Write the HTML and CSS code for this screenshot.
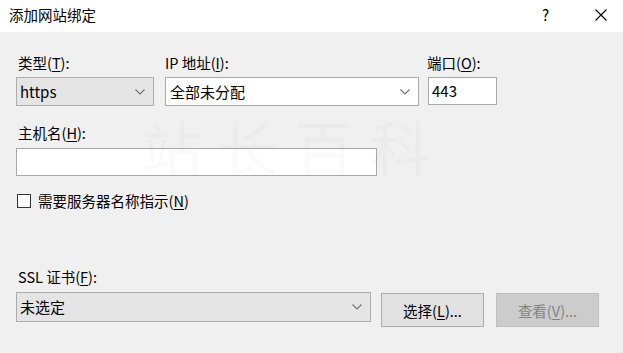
FILE: index.html
```html
<!DOCTYPE html>
<html lang="zh-CN">
<head>
<meta charset="utf-8">
<title>添加网站绑定</title>
<link rel="stylesheet" href="styles.css">
</head>
<body>
<div class="dialog">
  <div class="titlebar">
    <div class="title">添加网站绑定</div>
    <div class="title-btns">
      <span class="help">?</span>
      <svg class="close" width="12" height="12" viewBox="0 0 12 12"><path d="M0.5 0.5 L11.5 11.5 M11.5 0.5 L0.5 11.5" stroke="#000" stroke-width="1.1" fill="none"/></svg>
    </div>
  </div>
  <div class="main">
    <div class="row1">
      <div class="col col-type">
        <div class="label">类型(<u>T</u>):</div>
        <div class="combo combo-ro type-box"><span>https</span><svg class="chev" width="10" height="6" viewBox="0 0 10 6"><path d="M0.5 0.5 L5 5 L9.5 0.5" stroke="#707070" stroke-width="1.1" fill="none"/></svg></div>
      </div>
      <div class="col col-ip">
        <div class="label label-ip">IP 地址(<u>I</u>):</div>
        <div class="combo combo-edit ip-box"><span>全部未分配</span><svg class="chev" width="10" height="6" viewBox="0 0 10 6"><path d="M0.5 0.5 L5 5 L9.5 0.5" stroke="#707070" stroke-width="1.1" fill="none"/></svg></div>
      </div>
      <div class="col col-port">
        <div class="label label-port">端口(<u>O</u>):</div>
        <div class="textbox port-box">443</div>
      </div>
    </div>
    <div class="label host-label">主机名(<u>H</u>):</div>
    <div class="textbox host-box"></div>
    <div class="check-row">
      <span class="checkbox"></span>
      <span class="check-label">需要服务器名称指示(<u>N</u>)</span>
    </div>
    <div class="label ssl-label">SSL 证书(<u>F</u>):</div>
    <div class="ssl-row">
      <div class="combo combo-ro ssl-box"><span>未选定</span><svg class="chev" width="10" height="6" viewBox="0 0 10 6"><path d="M0.5 0.5 L5 5 L9.5 0.5" stroke="#707070" stroke-width="1.1" fill="none"/></svg></div>
      <div class="btn">选择(<u>L</u>)...</div>
      <div class="btn btn-disabled">查看(<u>V</u>)...</div>
    </div>
  </div>
  <div class="watermark">站长百科</div>
</div>
</body>
</html>
```
FILE: styles.css
```css
* { box-sizing: border-box; }
html, body { margin: 0; padding: 0; }
body {
  width: 623px;
  height: 353px;
  overflow: hidden;
  background: #f0f0f0;
  font-family: "Noto Sans CJK SC", "Noto Sans", sans-serif;
  color: #000;
}
.dialog { position: relative; width: 623px; height: 353px; }
u { text-decoration: underline; text-underline-offset: 2px; text-decoration-thickness: 1px; }

.titlebar {
  height: 32px;
  background: #fff;
  display: flex;
  align-items: center;
  justify-content: space-between;
  padding: 0 16px 0 9px;
}
.title { font-size: 14.5px; line-height: 20px; margin-top: -2px; }
.title-btns { display: flex; align-items: center; gap: 46px; margin-top: -2px; }
.help { font-size: 15px; line-height: 20px; }

.main { padding: 21px 0 0 16px; }
.row1 { display: flex; }
.col { display: flex; flex-direction: column; }
.col-type { width: 138px; }
.col-ip { width: 254px; margin-left: 11px; }
.col-port { width: 69px; margin-left: 9px; }

.label { font-size: 14.5px; line-height: 20px; height: 20px; margin-bottom: 4px; padding-left: 2px; }
.label-ip { padding-left: 0; }
.label-port { padding-left: 0; margin-left: -1px; }

.combo {
  height: 29px;
  border: 1px solid #adadad;
  display: flex;
  align-items: center;
  justify-content: space-between;
  font-size: 15px;
  padding: 0 8px 0 3px;
}
.combo span { line-height: 20px; }
.combo-ro { background: #e5e5e5; }
.combo-edit { background: #fff; border-color: #a8a8a8; padding-left: 4px; }
.chev { flex: none; }

.textbox {
  background: #fff;
  border: 1px solid #a8a8a8;
  height: 28px;
  font-size: 15px;
  line-height: 26px;
  padding-left: 3px;
}

.host-label { margin-top: 17px; margin-bottom: 5px; }
.host-box { width: 361px; }

.check-row { display: flex; align-items: center; margin-top: 15px; height: 20px; }
.checkbox {
  width: 14px; height: 14px;
  border: 1px solid #333;
  background: #fff;
  margin-left: 1px;
}
.check-label { font-size: 14.5px; line-height: 20px; margin-left: 7px; }

.ssl-label { margin-top: 56px; margin-bottom: 5px; }
.ssl-row { display: flex; align-items: flex-start; }
.ssl-box { width: 355px; height: 30px; padding-right: 8px; }

.btn {
  width: 103px;
  height: 34px;
  margin-top: 1px;
  margin-left: 10px;
  background: #e1e1e1;
  border: 1px solid #adadad;
  font-size: 14.5px;
  display: flex;
  align-items: center;
  justify-content: center;
}
.btn-disabled {
  margin-left: 12px;
  background: #cccccc;
  border-color: #bfbfbf;
  color: #838383;
}

.watermark {
  position: absolute;
  left: 142px;
  top: 116px;
  font-size: 60px;
  line-height: 60px;
  height: 60px;
  color: rgba(0, 0, 0, 0.02);
  pointer-events: none;
  letter-spacing: 16px;
}
```
